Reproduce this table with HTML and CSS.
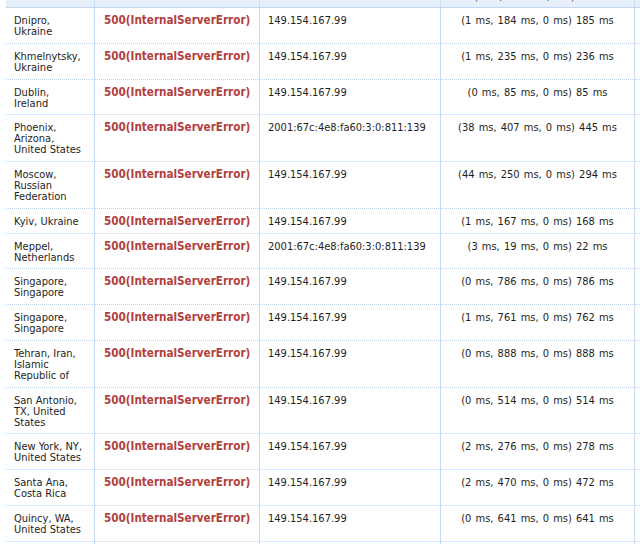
FILE: index.html
```html
<!DOCTYPE html>
<html>
<head>
<meta charset="utf-8">
<link rel="stylesheet" href="styles.css">
</head>
<body>
<div class="wrap">
<table class="results">
<thead>
<tr>
<th class="c-loc">Location</th>
<th class="c-status">Status</th>
<th class="c-ip">IP</th>
<th class="c-time">(DNS, Connect, SSL) Total</th>
<th class="c-extra"></th>
</tr>
</thead>
<tbody>
<tr><td>Dnipro,<br>Ukraine</td><td class="err">500(InternalServerError)</td><td>149.154.167.99</td><td class="time">(1 ms, 184 ms, 0 ms) 185 ms</td><td></td></tr>
<tr><td>Khmelnytsky,<br>Ukraine</td><td class="err">500(InternalServerError)</td><td>149.154.167.99</td><td class="time">(1 ms, 235 ms, 0 ms) 236 ms</td><td></td></tr>
<tr><td>Dublin,<br>Ireland</td><td class="err">500(InternalServerError)</td><td>149.154.167.99</td><td class="time">(0 ms, 85 ms, 0 ms) 85 ms</td><td></td></tr>
<tr><td>Phoenix,<br>Arizona,<br>United States</td><td class="err">500(InternalServerError)</td><td>2001:67c:4e8:fa60:3:0:811:139</td><td class="time">(38 ms, 407 ms, 0 ms) 445 ms</td><td></td></tr>
<tr><td>Moscow,<br>Russian<br>Federation</td><td class="err">500(InternalServerError)</td><td>149.154.167.99</td><td class="time">(44 ms, 250 ms, 0 ms) 294 ms</td><td></td></tr>
<tr><td>Kyiv, Ukraine</td><td class="err">500(InternalServerError)</td><td>149.154.167.99</td><td class="time">(1 ms, 167 ms, 0 ms) 168 ms</td><td></td></tr>
<tr><td>Meppel,<br>Netherlands</td><td class="err">500(InternalServerError)</td><td>2001:67c:4e8:fa60:3:0:811:139</td><td class="time">(3 ms, 19 ms, 0 ms) 22 ms</td><td></td></tr>
<tr><td>Singapore,<br>Singapore</td><td class="err">500(InternalServerError)</td><td>149.154.167.99</td><td class="time">(0 ms, 786 ms, 0 ms) 786 ms</td><td></td></tr>
<tr><td>Singapore,<br>Singapore</td><td class="err">500(InternalServerError)</td><td>149.154.167.99</td><td class="time">(1 ms, 761 ms, 0 ms) 762 ms</td><td></td></tr>
<tr><td>Tehran, Iran,<br>Islamic<br>Republic of</td><td class="err">500(InternalServerError)</td><td>149.154.167.99</td><td class="time">(0 ms, 888 ms, 0 ms) 888 ms</td><td></td></tr>
<tr><td>San Antonio,<br>TX, United<br>States</td><td class="err">500(InternalServerError)</td><td>149.154.167.99</td><td class="time">(0 ms, 514 ms, 0 ms) 514 ms</td><td></td></tr>
<tr><td>New York, NY,<br>United States</td><td class="err">500(InternalServerError)</td><td>149.154.167.99</td><td class="time">(2 ms, 276 ms, 0 ms) 278 ms</td><td></td></tr>
<tr><td>Santa Ana,<br>Costa Rica</td><td class="err">500(InternalServerError)</td><td>149.154.167.99</td><td class="time">(2 ms, 470 ms, 0 ms) 472 ms</td><td></td></tr>
<tr><td>Quincy, WA,<br>United States</td><td class="err">500(InternalServerError)</td><td>149.154.167.99</td><td class="time">(0 ms, 641 ms, 0 ms) 641 ms</td><td></td></tr>
<tr><td>&nbsp;</td><td></td><td></td><td></td><td></td></tr>
</tbody>
</table>
</div>
</body>
</html>
```

FILE: styles.css
```css
html, body {
  margin: 0;
  padding: 0;
  background: #ffffff;
  overflow: hidden;
}

.wrap {
  padding-left: 6px;
  height: 544px;
  overflow: hidden;
}

.results {
  margin-top: -16px;
  border-collapse: separate;
  border-spacing: 0;
  table-layout: fixed;
  width: 700px;
  font-family: "DejaVu Sans Condensed", "DejaVu Sans", sans-serif;
  font-stretch: condensed;
  font-size: 11px;
  line-height: 11px;
  color: #1e1e1e;
}

.results th {
  box-sizing: border-box;
  height: 24px;
  background: #e7effb;
  border-bottom: 1px solid #c3d7f0;
  border-right: 1px solid #c6dbf4;
  font-weight: normal;
  color: #333;
  padding: 0 8px 5px 8px;
  vertical-align: bottom;
  text-align: left;
  white-space: nowrap;
  overflow: hidden;
}

.results th.c-time {
  text-align: center;
}

.c-loc { width: 89px; }
.c-status { width: 165px; }
.c-ip { width: 181px; }
.c-time { width: 194px; }
.c-extra { width: 71px; }

.results td {
  box-sizing: border-box;
  padding: 7px 8px 5.75px 8px;
  vertical-align: top;
  border-bottom: 1px dotted #b9d2f0;
  border-right: 1px solid #c6dbf4;
  white-space: nowrap;
}

.results td.err {
  color: #b3403e;
  font-weight: bold;
  font-size: 11.6px;
  padding-left: 9px;
}

.results td.time {
  text-align: center;
  word-spacing: 1px;
}
```
